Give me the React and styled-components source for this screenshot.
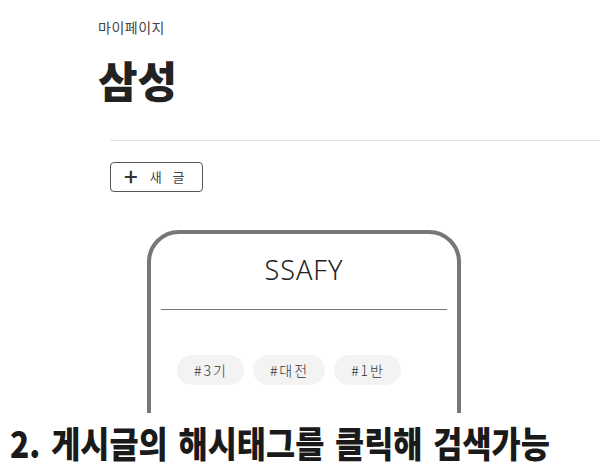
import React from 'react';
import styled, { createGlobalStyle } from 'styled-components';

const GlobalStyle = createGlobalStyle`
  html, body {
    margin: 0;
    padding: 0;
    background: #fff;
    font-family: "Noto Sans CJK KR", "Noto Sans", sans-serif;
    color: #222;
    overflow: hidden;
  }
`;

const tags = ['#3기', '#대전', '#1반'];

const App = () => (
  <Page>
    <GlobalStyle />
    <Header>
      <Crumb>마이페이지</Crumb>
      <Title>삼성</Title>
    </Header>
    <Divider />
    <Toolbar>
      <NewButton>
        <Plus>+</Plus>
        <span>새 글</span>
      </NewButton>
    </Toolbar>
    <CardArea>
      <Card>
        <CardTitle>SSAFY</CardTitle>
        <CardRule />
        <TagRow>
          {tags.map(t => (
            <Tag key={t}>{t}</Tag>
          ))}
        </TagRow>
      </Card>
    </CardArea>
    <Caption>
      <CaptionText>2. 게시글의 해시태그를 클릭해 검색가능</CaptionText>
    </Caption>
  </Page>
);

export default App;

const Page = styled.div`
  position: relative;
  width: 600px;
  height: 470px;
  overflow: hidden;
`;

const Header = styled.div`
  padding: 16px 0 0 98px;
  display: flex;
  flex-direction: column;
`;

const Crumb = styled.div`
  font-size: 14px;
  line-height: 22px;
  color: #444;
  letter-spacing: 0.5px;
`;

const Title = styled.h1`
  margin: 13px 0 0;
  font-size: 43px;
  line-height: 56px;
  font-weight: 900;
  color: #222;
`;

const Divider = styled.div`
  margin: 33px 0 0 110px;
  height: 1px;
  background: #e2e2e2;
`;

const Toolbar = styled.div`
  padding: 21px 0 0 110px;
  display: flex;
`;

const NewButton = styled.button`
  display: flex;
  align-items: center;
  gap: 12px;
  box-sizing: border-box;
  width: 93px;
  height: 30px;
  padding: 0 0 2px 13px;
  border: 1px solid #555;
  border-radius: 4px;
  background: #fff;
  font-family: "Noto Sans CJK KR", sans-serif;
  font-size: 13px;
  letter-spacing: 4px;
  color: #444;
`;

const Plus = styled.span`
  font-size: 24px;
  font-weight: 500;
  line-height: 1;
  color: #333;
  letter-spacing: 0;
`;

const CardArea = styled.div`
  padding: 38px 0 0 147px;
`;

const Card = styled.div`
  box-sizing: border-box;
  width: 314px;
  height: 260px;
  border: 4px solid #777;
  border-radius: 32px 32px 0 0;
  padding: 19px 10px 0;
  display: flex;
  flex-direction: column;
`;

const CardTitle = styled.div`
  text-align: center;
  font-family: "Noto Sans", sans-serif;
  font-weight: 300;
  font-size: 27px;
  line-height: 34px;
  color: #222;
  letter-spacing: 1px;
`;

const CardRule = styled.div`
  margin-top: 22px;
  height: 1px;
  background: #777;
`;

const TagRow = styled.div`
  display: flex;
  gap: 9px;
  padding: 45px 0 0 16px;
`;

const Tag = styled.span`
  display: inline-flex;
  align-items: center;
  height: 30px;
  padding: 0 16px 0 17px;
  border-radius: 15px;
  background: #f3f3f3;
  font-size: 14px;
  font-weight: 300;
  letter-spacing: 2px;
  color: #333;
`;

const Caption = styled.div`
  position: absolute;
  left: 0;
  right: 0;
  bottom: 0;
  height: 57px;
  background: #fff;
  display: flex;
  align-items: center;
  padding-left: 10px;
`;

const CaptionText = styled.div`
  font-family: "Noto Sans CJK KR", sans-serif;
  font-weight: 900;
  font-size: 36px;
  line-height: 1;
  color: #1a1a1a;
  white-space: nowrap;
  word-spacing: 4px;
  transform: scaleX(0.88);
  transform-origin: left center;
`;
